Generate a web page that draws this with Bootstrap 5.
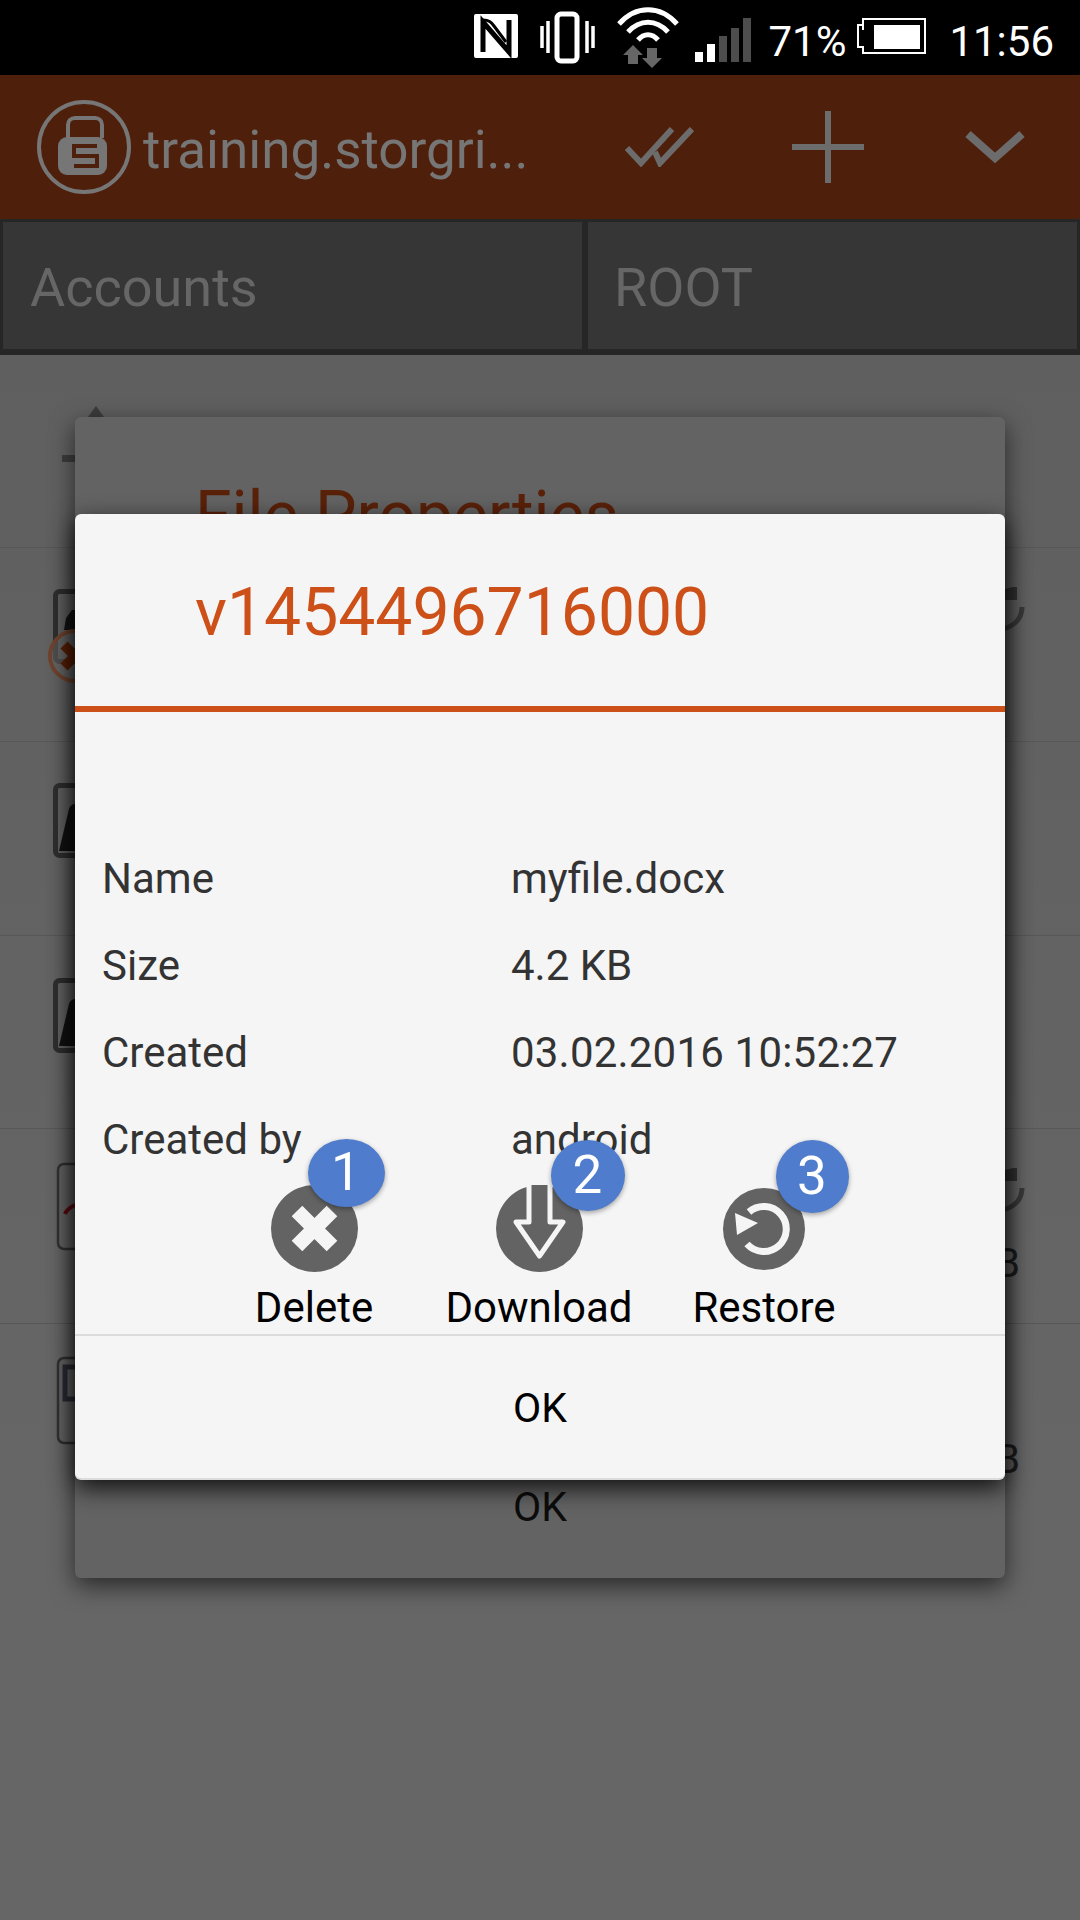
<!DOCTYPE html>
<html lang="en">
<head>
  <meta charset="UTF-8" />
  <meta name="viewport" content="width=device-width, initial-scale=1.0" />
  <title>File Properties</title>
  <link href="https://cdn.jsdelivr.net/npm/bootstrap@5.3.3/dist/css/bootstrap.min.css" rel="stylesheet">
  <style>
    body { background: #666; font-family: Roboto, "Liberation Sans", sans-serif; }
    svg { display: block; flex: none; }
    .screen { width: 1080px; height: 1920px; overflow: hidden; }

    /* status bar */
    .status-bar { height: 75px; background: #000; color: #fff; padding-right: 26px; }
    .status-text { font-size: 42px; line-height: 75px; padding-top: 4px; height: 75px; }
    .ms-s1 { margin-left: 22px; }
    .ms-s2 { margin-left: 20px; }
    .ms-s3 { margin-left: 15px; }
    .ms-s4 { margin-left: 16px; }
    .ms-s5 { margin-left: 11px; }
    .ms-s6 { margin-left: 23px; }

    /* app bar */
    .app-bar { height: 144px; background: #4e1f0b; padding-left: 37px; }
    .app-title { width: 482px; margin-left: 12px; padding-top: 6px; font-size: 53px; line-height: 60px; color: #767676; white-space: nowrap; }
    .ms-plus { margin-left: 98px; }
    .ms-chev { margin-left: 101px; }

    /* breadcrumb */
    .crumbs { height: 136px; background: #262626; padding: 3px 3px 6px; gap: 6px; }
    .crumb { background: #363636; color: #666; font-size: 54px; line-height: 60px; padding-top: 5px; }
    .crumb-a { width: 579px; padding-left: 27px; }
    .crumb-b { flex: 1; padding-left: 26px; }

    /* list behind the dialogs */
    .file-list { background: linear-gradient(#5f5f5f, #666); }
    .file-row { background: transparent; border: 0; border-bottom: 2px solid #575757; padding: 0; }
    .row-a { height: 193px; }
    .row-b { height: 194px; }
    .row-c { height: 194px; }
    .row-d { height: 193px; }
    .row-e { height: 195px; }
    .row-f { height: 190px; border-bottom: 0; }
    .row-side { width: 40px; margin-right: 50px; }
    .size-b { font-size: 41px; line-height: 41px; color: #1d1d1d; text-align: right; padding-right: 10px; }
    .mt-r1 { margin-top: 39px; }
    .mt-r3 { margin-top: 25px; }
    .mt-r4 { margin-top: 115px; }

    /* dialogs, they lie over the list */
    .dialog { position: absolute; left: 75px; width: 930px; border: 0; border-radius: 6px; }
    .dialog-back { top: 417px; height: 1161px; background: #636363; box-shadow: 0 8px 24px rgba(0, 0, 0, .6); }
    .dialog-front { top: 514px; height: 966px; background: #f5f5f5; border-bottom: 2px solid #dcdcdc; box-shadow: 0 8px 24px rgba(0, 0, 0, .85); }
    .back-title { font-size: 66px; line-height: 80px; color: #5a2109; margin: 59px 0 0 120px; }
    .back-ok { position: absolute; left: 0; right: 0; top: 1060px; text-align: center; font-size: 41px; line-height: 60px; color: #0c0c0c; }
    .front-head { height: 192px; padding: 5px 0 0 120px; font-size: 66px; color: #cd5019; }
    .head-rule { height: 6px; background: #cd5019; }
    .props { padding: 123px 0 0 27px; height: 474px; }
    .prop-row { height: 87px; font-size: 42px; line-height: 87px; color: #333; }
    .prop-name { width: 409px; }
    .prop-date { letter-spacing: .2px; }

    .actions { height: 151px; padding-right: 2px; border-bottom: 2px solid #dcdcdc; }
    .action-item { width: 225px; }
    .action-icon { position: relative; height: 87px; }
    .action-label { font-size: 42px; line-height: 72px; color: #000; white-space: nowrap; }
    .num-badge { position: absolute; background: #4f7ccc; color: #fff; font-size: 53px; box-shadow: 0 2px 5px rgba(0, 0, 0, .35); }
    .num-1 { width: 77px; height: 68px; left: 106px; top: -46px; border-radius: 50%; }
    .num-2 { width: 74px; height: 71px; left: 124px; top: -45px; border-radius: 50%; }
    .num-3 { width: 73px; height: 73px; left: 124px; top: -45px; border-radius: 50%; }
    .ok-btn { height: 142px; font-size: 41px; color: #000; padding-top: 4px; }
  </style>
</head>
<body>
<div class="screen position-relative">

  <!-- status bar -->
  <div class="status-bar d-flex justify-content-end">
    <svg width="44" height="75" viewBox="0 0 44 75">
      <rect x="0" y="14" width="44" height="44" rx="2" fill="#fff"/>
      <path d="M9 52V22l26 30V20" fill="none" stroke="#000" stroke-width="5"/>
      <path d="M9 20c6 0 8 2 11 6l12 16" fill="none" stroke="#000" stroke-width="3"/>
    </svg>
    <svg class="ms-s1" width="56" height="75" viewBox="0 0 56 75">
      <rect x="17" y="14" width="20" height="47" rx="4" fill="none" stroke="#fff" stroke-width="5"/>
      <path d="M2 26v22M8 21v32M47 21v32M53 26v22" stroke="#fff" stroke-width="3.5" fill="none"/>
    </svg>
    <svg class="ms-s2" width="64" height="75" viewBox="0 0 64 75">
      <path d="M3 24C20 5 44 5 61 24" fill="none" stroke="#fff" stroke-width="5"/>
      <path d="M12 32c12-13 28-13 40 0" fill="none" stroke="#fff" stroke-width="5"/>
      <path d="M22 40c6-7 14-7 20 0" fill="none" stroke="#fff" stroke-width="5"/>
      <path d="M12 64V55H7l10-10 10 10h-5v9zM31 48h10v10h5L36 68 26 58h5z" fill="#666"/>
    </svg>
    <svg class="ms-s3" width="57" height="75" viewBox="0 0 57 75">
      <rect x="0" y="52" width="8" height="10" fill="#fff"/>
      <rect x="12" y="44" width="8" height="18" fill="#fff"/>
      <rect x="24" y="36" width="8" height="26" fill="#4d4d4d"/>
      <rect x="36" y="28" width="8" height="34" fill="#4d4d4d"/>
      <rect x="48" y="18" width="8" height="44" fill="#4d4d4d"/>
    </svg>
    <div class="status-text ms-s4">71%</div>
    <svg class="ms-s5" width="69" height="75" viewBox="0 0 69 75">
      <path d="M6 31V26H1v22h5v6h62V20H6z" transform="translate(0 -1)" fill="none" stroke="#fff" stroke-width="2"/>
      <rect x="17" y="25" width="46" height="24" fill="#fff"/>
    </svg>
    <div class="status-text ms-s6">11:56</div>
  </div>

  <!-- app bar -->
  <div class="app-bar d-flex align-items-center">
    <svg width="94" height="94" viewBox="0 0 94 94">
      <circle cx="47" cy="47" r="45" fill="none" stroke="#767676" stroke-width="4"/>
      <path d="M31 38V25c0-4 3-7 7-7h20c4 0 7 3 7 7v13" fill="none" stroke="#767676" stroke-width="4"/>
      <rect x="21" y="37" width="49" height="38" rx="9" fill="#767676"/>
      <path d="M60 46H37v10h23v10H37" fill="none" stroke="#4e1f0b" stroke-width="4"/>
    </svg>
    <div class="app-title">training.storgri...</div>
    <svg width="69" height="40" viewBox="0 0 69 40">
      <polyline points="2,21 16,36 47,2" fill="none" stroke="#6c6c6c" stroke-width="6"/>
      <polyline points="30,25 35,36 67,2" fill="none" stroke="#6c6c6c" stroke-width="6"/>
    </svg>
    <svg class="ms-plus" width="72" height="72" viewBox="0 0 72 72">
      <path d="M36 0v72M0 36h72" fill="none" stroke="#6c6c6c" stroke-width="6"/>
    </svg>
    <svg class="ms-chev" width="60" height="33" viewBox="0 0 60 33">
      <polyline points="3,3 30,27 57,3" fill="none" stroke="#6c6c6c" stroke-width="8"/>
    </svg>
  </div>

  <!-- breadcrumb -->
  <div class="crumbs d-flex">
    <div class="crumb crumb-a d-flex align-items-center">Accounts</div>
    <div class="crumb crumb-b d-flex align-items-center">ROOT</div>
  </div>

  <!-- file list behind the dialogs -->
  <ul class="file-list list-group list-group-flush">
    <li class="list-group-item file-row row-a d-flex">
      <svg class="ms-5" width="60" height="110" viewBox="0 0 60 110">
        <path d="M40 62l8-11 8 11z" fill="#3c3c3c"/>
        <rect x="14" y="100" width="20" height="7" fill="#3c3c3c"/>
      </svg>
    </li>
    <li class="list-group-item file-row row-b d-flex justify-content-between">
      <svg width="90" height="140" viewBox="0 0 90 140">
        <rect x="55.500" y="43.500" width="40" height="70" rx="4" fill="none" stroke="#2f2f2f" stroke-width="5"/>
        <path d="M66 70l6-8h18v20H64z" fill="#141414"/>
        <circle cx="75" cy="108" r="25" fill="#666" fill-opacity=".6" stroke="#70442f" stroke-width="4"/>
        <path d="M64 97l22 22M86 97l-22 22" stroke="#5a1f06" stroke-width="10" fill="none"/>
      </svg>
      <div class="row-side">
        <svg class="mt-r1" width="40" height="50" viewBox="0 0 40 50">
          <path d="M15 2l12-3v14H15z" fill="#333"/>
          <path d="M32 20c0 12-8 22-30 24" fill="none" stroke="#3a3a3a" stroke-width="5"/>
        </svg>
      </div>
    </li>
    <li class="list-group-item file-row row-c d-flex">
      <svg width="90" height="130" viewBox="0 0 90 130">
        <rect x="55.500" y="43.500" width="40" height="70" rx="4" fill="none" stroke="#2f2f2f" stroke-width="5"/>
        <path d="M59 109l10-42c1-3 3-5 7-5h14v47z" fill="#121212"/>
      </svg>
    </li>
    <li class="list-group-item file-row row-d d-flex">
      <svg width="90" height="130" viewBox="0 0 90 130">
        <rect x="55.500" y="44.500" width="40" height="70" rx="4" fill="none" stroke="#2f2f2f" stroke-width="5"/>
        <path d="M59 110l10-42c1-3 3-5 7-5h14v47z" fill="#121212"/>
      </svg>
    </li>
    <li class="list-group-item file-row row-e d-flex justify-content-between">
      <svg width="90" height="130" viewBox="0 0 90 130">
        <rect x="58" y="35" width="40" height="85" rx="6" fill="none" stroke="#323232" stroke-width="2.500"/>
        <path d="M65 85c2-5 6-7 10-9" fill="none" stroke="#5e0b12" stroke-width="4"/>
      </svg>
      <div class="row-side">
        <svg class="mt-r1" width="40" height="50" viewBox="0 0 40 50">
          <path d="M15 2l12-3v14H15z" fill="#333"/>
          <path d="M32 20c0 12-8 22-30 24" fill="none" stroke="#3a3a3a" stroke-width="5"/>
        </svg>
        <div class="size-b mt-r3">B</div>
      </div>
    </li>
    <li class="list-group-item file-row row-f d-flex justify-content-between">
      <svg width="90" height="130" viewBox="0 0 90 130">
        <rect x="58" y="34" width="40" height="85" rx="6" fill="none" stroke="#323232" stroke-width="2.500"/>
        <rect x="65" y="43" width="30" height="32" fill="none" stroke="#2b2d36" stroke-width="5"/>
      </svg>
      <div class="row-side">
        <div class="size-b mt-r4">B</div>
      </div>
    </li>
  </ul>

  <!-- dialog underneath -->
  <div class="dialog dialog-back card">
    <div class="back-title">File Properties</div>
    <div class="back-ok">OK</div>
  </div>

  <!-- version dialog -->
  <div class="dialog dialog-front card">
    <div class="front-head d-flex align-items-center">v1454496716000</div>
    <div class="head-rule"></div>
    <div class="props">
      <div class="prop-row d-flex"><div class="prop-name">Name</div><div>myfile.docx</div></div>
      <div class="prop-row d-flex"><div class="prop-name">Size</div><div>4.2 KB</div></div>
      <div class="prop-row d-flex"><div class="prop-name">Created</div><div class="prop-date">03.02.2016 10:52:27</div></div>
      <div class="prop-row d-flex"><div class="prop-name">Created by</div><div>android</div></div>
    </div>
    <div class="actions d-flex justify-content-center">
      <div class="action-item text-center">
        <div class="action-icon d-flex justify-content-center">
          <svg width="87" height="87" viewBox="0 0 87 87">
            <circle cx="43.500" cy="43.500" r="43.500" fill="#636363"/>
            <path d="M26 26l35 35M61 26L26 61" stroke="#f5f5f5" stroke-width="15" fill="none"/>
          </svg>
          <span class="num-badge num-1 d-flex align-items-center justify-content-center">1</span>
        </div>
        <div class="action-label">Delete</div>
      </div>
      <div class="action-item text-center">
        <div class="action-icon d-flex justify-content-center">
          <svg width="87" height="87" viewBox="0 0 87 87">
            <circle cx="43.500" cy="43.500" r="43.500" fill="#636363"/>
            <path d="M33 0v37H20l23.500 34L67 37H54V0" fill="#636363" stroke="#f5f5f5" stroke-width="5" stroke-linejoin="round"/>
          </svg>
          <span class="num-badge num-2 d-flex align-items-center justify-content-center">2</span>
        </div>
        <div class="action-label">Download</div>
      </div>
      <div class="action-item text-center">
        <div class="action-icon d-flex justify-content-center align-items-center">
          <svg width="82" height="82" viewBox="0 0 82 82">
            <circle cx="41" cy="41" r="41" fill="#636363"/>
            <path d="M26 24A22.500 22.500 0 1 1 24 56" fill="none" stroke="#f5f5f5" stroke-width="7"/>
            <path d="M12 25l23 10-21 12z" fill="#f5f5f5"/>
          </svg>
          <span class="num-badge num-3 d-flex align-items-center justify-content-center">3</span>
        </div>
        <div class="action-label">Restore</div>
      </div>
    </div>
    <div class="ok-btn d-flex align-items-center justify-content-center">OK</div>
  </div>

</div>
<script src="https://cdn.jsdelivr.net/npm/bootstrap@5.3.3/dist/js/bootstrap.bundle.min.js"></script>
</body>
</html>
